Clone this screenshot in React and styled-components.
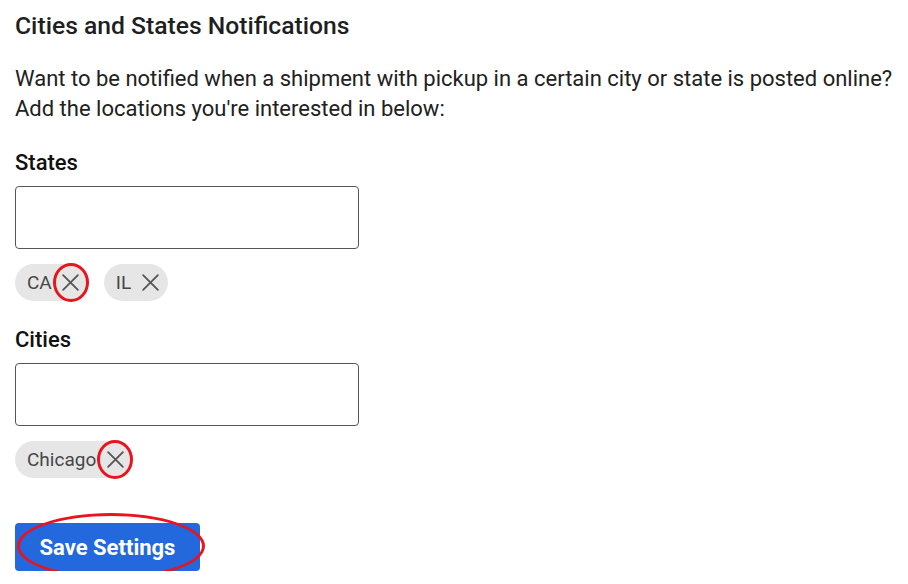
import React from 'react';
import styled, { createGlobalStyle } from 'styled-components';

const GlobalStyle = createGlobalStyle`
  body {
    margin: 0;
    background: #fff;
    font-family: Roboto, 'Liberation Sans', sans-serif;
    color: #212121;
  }
`;

const Page = styled.div`
  padding: 10px 15px 0;
`;

const Title = styled.h2`
  margin: 0;
  font-size: 24.7px;
  line-height: 31px;
  font-weight: 500;
  color: #1f1f1f;
`;

const Intro = styled.p`
  margin: 23px 0 0;
  font-size: 22px;
  line-height: 30px;
  color: #212121;
`;

const Section = styled.div`
  margin-top: ${(p) => p.$top}px;
`;

const Label = styled.div`
  font-size: 22px;
  line-height: 28px;
  font-weight: 500;
  color: #111;
`;

const Input = styled.input`
  display: block;
  box-sizing: border-box;
  width: 344px;
  height: 63px;
  margin-top: 9px;
  border: 1px solid #555;
  border-radius: 4px;
  background: #fff;
`;

const ChipRow = styled.div`
  display: flex;
  gap: 15px;
  margin-top: 15px;
`;

const Chip = styled.div`
  display: inline-flex;
  align-items: center;
  gap: 9px;
  height: 37px;
  padding: 0 8px 0 12px;
  border-radius: 19px;
  background: #e6e6e6;
  font-size: 19px;
  color: #474747;
`;

const Remove = styled.span`
  position: relative;
  display: inline-flex;
  width: 20px;
  height: 20px;
  align-items: center;
  justify-content: center;
  color: #555;
`;

const Ring = styled.span`
  position: absolute;
  top: ${(p) => p.$top}px;
  bottom: ${(p) => p.$bottom}px;
  left: ${(p) => p.$left}px;
  right: ${(p) => p.$right}px;
  border: 3px solid #e8141e;
  border-radius: 50%;
  pointer-events: none;
`;

const Button = styled.button`
  position: relative;
  display: block;
  margin-top: 45px;
  width: 185px;
  height: 48px;
  border: none;
  border-radius: 4px;
  background: #2368dc;
  color: #fff;
  font-family: Roboto, 'Liberation Sans', sans-serif;
  font-size: 22px;
  font-weight: 700;
`;

const Cross = () => (
  <svg width="19" height="19" viewBox="0 0 18 18" fill="none">
    <path d="M2 2L16 16M16 2L2 16" stroke="currentColor" strokeWidth="1.7" strokeLinecap="round" />
  </svg>
);

const Tag = ({ label, marked }) => (
  <Chip>
    {label}
    <Remove>
      <Cross />
      {marked && <Ring $top={-10} $bottom={-9} $left={-8} $right={-8} />}
    </Remove>
  </Chip>
);

export default function App() {
  return (
    <Page>
      <GlobalStyle />
      <Title>Cities and States Notifications</Title>
      <Intro>
        Want to be notified when a shipment with pickup in a certain city or state is posted online?
        <br />
        Add the locations you're interested in below:
      </Intro>
      <Section $top={25}>
        <Label>States</Label>
        <Input />
        <ChipRow>
          <Tag label="CA" marked />
          <Tag label="IL" />
        </ChipRow>
      </Section>
      <Section $top={25}>
        <Label>Cities</Label>
        <Input />
        <ChipRow>
          <Tag label="Chicago" marked />
        </ChipRow>
      </Section>
      <Button>
        Save Settings
        <Ring $top={-10} $bottom={-8} $left={2} $right={-5} />
      </Button>
    </Page>
  );
}
